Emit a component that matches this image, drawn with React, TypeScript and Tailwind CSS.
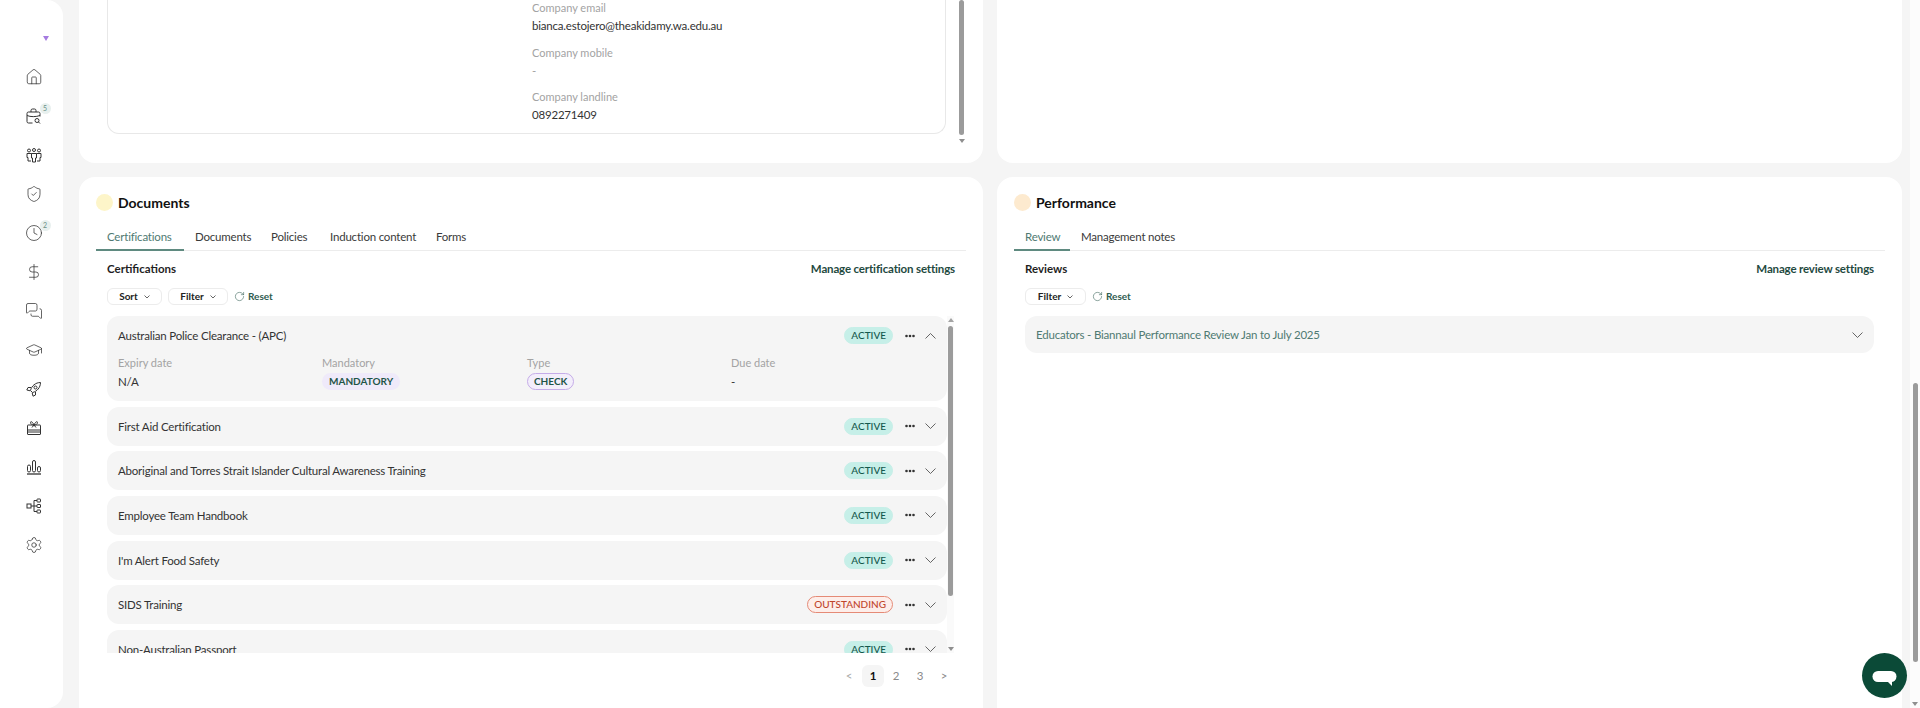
import React from "react";
import {
  Clock,
  DollarSign,
  GraduationCap,
  House,
  MessagesSquare,
  RotateCw,
  Settings,
  ShieldCheck,
} from "lucide-react";

const FONT = "font-['Lato','Liberation_Sans',sans-serif]";
const BODY = "text-[11.5px] tracking-[-0.2px]";
const ICON = "#333333";

const BriefcaseSearch = () => (
  <svg width="16" height="16" viewBox="0 0 16 16" fill="none" stroke={ICON} strokeWidth="1" className="shrink-0">
    <path d="M6.500 15H2.500a1.500 1.500 0 0 1-1.500-1.500V5.500A1.500 1.500 0 0 1 2.500 4h10A1.500 1.500 0 0 1 14 5.500v3" />
    <path d="M5 4V2.500A1.500 1.500 0 0 1 6.500 1h2A1.500 1.500 0 0 1 10 2.500V4M1 7.500c3.500 1.500 9 1.500 13 0" />
    <circle cx="11" cy="12.500" r="2" />
    <path d="M12.500 14l1.500 1.500" />
  </svg>
);

const Team = () => (
  <svg width="16" height="16" viewBox="0 0 16 16" fill="none" stroke={ICON} strokeWidth="1" className="shrink-0">
    <circle cx="3" cy="3.500" r="1.500" />
    <circle cx="8" cy="3" r="1.500" />
    <circle cx="13" cy="3.500" r="1.500" />
    <path d="M5.500 6.500h5v4.500L9.500 11v4h-3v-4l-1 0z" />
    <path d="M5.500 6.500H1v4h1v3.500h3M10.500 6.500H15v4h-1v3.500h-3" />
  </svg>
);

const RocketIcon = () => (
  <svg width="16" height="16" viewBox="0 0 16 16" fill="none" stroke={ICON} strokeWidth="1" className="shrink-0">
    <path d="M4.500 9.500C5.500 5 9.500 1.500 14.500 1.500c0 5-3.500 9-8 10z" />
    <circle cx="9.500" cy="6.500" r="1.500" />
    <path d="M5 6.500H2L0.800 9l3.400 0.800M9.500 11v3L7 15.200l-0.800-3.400" />
  </svg>
);

const GiftBox = () => (
  <svg width="16" height="16" viewBox="0 0 16 16" fill="none" stroke={ICON} strokeWidth="1" className="shrink-0">
    <rect x="1.500" y="5" width="13" height="9.500" rx="0.500" />
    <path d="M1.500 10h13M1.500 12h13" />
    <path d="M8 5C6.500 1.500 4.500 1 4.500 2.500S6 5 8 5zm0 0c1.500-3.500 3.500-4 3.500-2.500S10 5 8 5z" />
    <path d="M6 7.500l2-2.500 2 2.500" />
  </svg>
);

const Bars = () => (
  <svg width="16" height="16" viewBox="0 0 16 16" fill="none" stroke={ICON} strokeWidth="1" className="shrink-0">
    <rect x="1.500" y="6" width="3" height="7" rx="1.500" />
    <rect x="6.500" y="1.500" width="3" height="11.500" rx="1.500" />
    <rect x="11.500" y="7.500" width="3" height="5.500" rx="1.500" />
    <path d="M1 15h14" strokeWidth="1.300" />
  </svg>
);

const TreeNodes = () => (
  <svg width="16" height="16" viewBox="0 0 16 16" fill="none" stroke={ICON} strokeWidth="1" className="shrink-0">
    <rect x="1" y="6" width="4" height="4" />
    <rect x="11" y="1" width="3.500" height="3" rx="0.500" />
    <rect x="11" y="6.500" width="3.500" height="3" rx="0.500" />
    <rect x="11" y="12" width="3.500" height="3" rx="0.500" />
    <path d="M5 8H11M8 2.500V13.500M8 2.500h3M8 13.500h3" />
  </svg>
);

const Chevron = ({ up }: { up?: boolean }) => (
  <svg width="11" height="6" viewBox="0 0 11 6" fill="none" stroke="#555" strokeWidth="0.9" className={`shrink-0 ${up ? "rotate-180" : ""}`}>
    <path d="M0.500 0.500l5 5 5-5" />
  </svg>
);

const Dots = () => (
  <svg width="10" height="4" viewBox="0 0 10 4" fill="#333" className="shrink-0">
    <circle cx="1.500" cy="2" r="1.300" />
    <circle cx="5" cy="2" r="1.300" />
    <circle cx="8.500" cy="2" r="1.300" />
  </svg>
);

type NavItem = { icon: React.ReactNode; badge?: string };

const lucideProps = { size: 18, strokeWidth: 1, color: ICON, className: "shrink-0" };

const nav: NavItem[] = [
  { icon: <House {...lucideProps} /> },
  { icon: <BriefcaseSearch />, badge: "5" },
  { icon: <Team /> },
  { icon: <ShieldCheck {...lucideProps} /> },
  { icon: <Clock {...lucideProps} />, badge: "2" },
  { icon: <DollarSign {...lucideProps} /> },
  { icon: <MessagesSquare {...lucideProps} /> },
  { icon: <GraduationCap {...lucideProps} /> },
  { icon: <RocketIcon /> },
  { icon: <GiftBox /> },
  { icon: <Bars /> },
  { icon: <TreeNodes /> },
  { icon: <Settings {...lucideProps} /> },
];

const Sidebar = () => (
  <aside className="w-[63px] h-[708px] shrink-0 bg-white rounded-r-2xl flex flex-col items-center pl-[5px] pt-[36px]">
    <div className="ml-6 w-0 h-0 border-x-[3px] border-x-transparent border-t-[5px] border-t-[#a57be0]" />
    <div className="flex flex-col items-center gap-[23px] mt-[28px]">
      {nav.map((item, i) => (
        <div key={i} className="relative size-4 flex items-center justify-center">
          {item.icon}
          {item.badge && (
            <span className="absolute -top-[5.5px] -right-[8.5px] size-[11px] rounded-full bg-[#e8f0ee] text-[#6a8f85] text-[7px] leading-[11px] text-center">
              {item.badge}
            </span>
          )}
        </div>
      ))}
    </div>
  </aside>
);

const SectionTitle = ({ title, dot }: { title: string; dot: string }) => (
  <div className="flex items-center gap-[5px] h-[17px]">
    <span className={`size-[17px] rounded-full ${dot}`} />
    <h2 className="text-[14px] font-bold text-[#111] leading-none">{title}</h2>
  </div>
);

const Tabs = ({ tabs }: { tabs: { label: string; width: number }[] }) => (
  <div className="flex border-b border-[#ececec] mt-[10px] h-[30px]">
    {tabs.map((t, i) => (
      <div
        key={t.label}
        style={{ width: t.width }}
        className={`h-[30px] px-[11px] pt-[9px] ${BODY} leading-[14px] whitespace-nowrap ${
          i === 0 ? "text-[#4f7a72] border-b-2 border-[#5f8a80]" : "text-[#3a3a3a]"
        }`}
      >
        {t.label}
      </div>
    ))}
  </div>
);

const Toolbutton = ({ label, width }: { label: string; width: string }) => (
  <button className={`${width} h-[17px] border border-[#ececec] rounded-md bg-white flex items-center justify-center gap-[6px] text-[10px] font-bold text-[#222]`}>
    {label}
    <svg width="6" height="4" viewBox="0 0 6 4" fill="none" stroke="#555" strokeWidth="0.9" className="shrink-0">
      <path d="M0.500 0.500l2.500 2.500 2.500-2.500" />
    </svg>
  </button>
);

const Reset = () => (
  <div className="flex items-center gap-[3px] text-[10px] font-bold text-[#2f5c50]">
    <RotateCw size={11} strokeWidth={1.2} color="#2f5c50" />
    Reset
  </div>
);

const SubHeader = ({ title, action }: { title: string; action: string }) => (
  <div className="flex items-center justify-between h-[14px] mt-[11px]">
    <span className="text-[11.5px] font-bold text-[#1f1f1f]">{title}</span>
    <span className="text-[11.5px] tracking-[-0.15px] font-bold text-[#1f4a3f]">{action}</span>
  </div>
);

const Badge = ({ label, red }: { label: string; red?: boolean }) => (
  <span
    className={`h-[17px] px-[6px] rounded-full text-[10px] font-medium leading-[15px] border ${
      red
        ? "border-[#e58a76] bg-[#fdeeea] text-[#c0452b]"
        : "border-[#c6efe8] bg-[#c6efe8] text-[#14584c]"
    }`}
  >
    {label}
  </span>
);

const Field = ({ label, children, width }: { label: string; children: React.ReactNode; width: string }) => (
  <div className={`${width} flex flex-col gap-[3px]`}>
    <span className="text-[11px] leading-[14px] text-[#a3a3a3]">{label}</span>
    <div className={`h-[17px] flex items-center ${BODY} text-[#333]`}>{children}</div>
  </div>
);

const RowActions = ({ badge, red, open }: { badge: string; red?: boolean; open?: boolean }) => (
  <div className="flex items-center">
    <Badge label={badge} red={red} />
    <span className="ml-[12px] flex"><Dots /></span>
    <span className="ml-[10px] flex"><Chevron up={open} /></span>
  </div>
);

const rows = [
  { title: "First Aid Certification", badge: "ACTIVE" },
  { title: "Aboriginal and Torres Strait Islander Cultural Awareness Training", badge: "ACTIVE" },
  { title: "Employee Team Handbook", badge: "ACTIVE" },
  { title: "I'm Alert Food Safety", badge: "ACTIVE" },
  { title: "SIDS Training", badge: "OUTSTANDING", red: true },
  { title: "Non-Australian Passport", badge: "ACTIVE" },
];

const Documents = () => (
  <section className="bg-white rounded-2xl h-[600px] px-[17px] pt-[17px]">
    <SectionTitle title="Documents" dot="bg-[#fdf5c9]" />
    <Tabs
      tabs={[
        { label: "Certifications", width: 88 },
        { label: "Documents", width: 76 },
        { label: "Policies", width: 59 },
        { label: "Induction content", width: 106 },
        { label: "Forms", width: 52 },
      ]}
    />
    <div className="px-[11px]">
      <SubHeader title="Certifications" action="Manage certification settings" />
      <div className="flex items-center gap-[6px] mt-[12px]">
        <Toolbutton label="Sort" width="w-[55px]" />
        <Toolbutton label="Filter" width="w-[60px]" />
        <Reset />
      </div>
    </div>
    <div className="flex h-[337px] mt-[11px] pl-[11px] overflow-hidden">
      <div className="w-[840px] shrink-0 flex flex-col gap-[5.67px] overflow-hidden">
        <div className="bg-[#f5f5f5] rounded-xl h-[85px] shrink-0 px-[11px] pt-[11px]">
          <div className="flex items-center justify-between h-[17px]">
            <span className={`${BODY} text-[#333]`}>Australian Police Clearance - (APC)</span>
            <RowActions badge="ACTIVE" open />
          </div>
          <div className="flex mt-[12px]">
            <Field label="Expiry date" width="w-[204px]">N/A</Field>
            <Field label="Mandatory" width="w-[205px]">
              <span className="h-[17px] px-[7px] rounded-full bg-[#efeafa] text-[#1f5548] text-[10px] font-bold tracking-normal leading-[17px]">MANDATORY</span>
            </Field>
            <Field label="Type" width="w-[204px]">
              <span className="h-[17px] px-[6px] rounded-full bg-[#f3eefb] border border-[#c5ace8] text-[#1f5548] text-[10px] font-bold tracking-normal leading-[15px]">CHECK</span>
            </Field>
            <Field label="Due date" width="w-[150px]">-</Field>
          </div>
        </div>
        {rows.map((r) => (
          <div key={r.title} className="bg-[#f5f5f5] rounded-xl h-[39px] shrink-0 px-[11px] flex items-center justify-between">
            <span className={`${BODY} text-[#333]`}>{r.title}</span>
            <RowActions badge={r.badge} red={r.red} />
          </div>
        ))}
      </div>
      <div className="w-[7px] shrink-0 flex flex-col items-center bg-[#fafafa]">
        <div className="w-0 h-0 border-x-[3px] border-x-transparent border-b-[4px] border-b-[#a3a3a3] mt-[2px]" />
        <div className="w-[5px] h-[270px] rounded-full bg-[#9b9b9b] mt-[4px]" />
        <div className="mt-auto mb-[2px] w-0 h-0 border-x-[3px] border-x-transparent border-t-[4px] border-t-[#8f8f8f]" />
      </div>
    </div>
    <div className="flex items-center justify-end pr-[10px] mt-[12px] text-[11.5px] text-[#8a8a8a]">
      <span className="w-[26px] text-center text-[#aaa]">&lt;</span>
      <span className="size-[22px] rounded-md bg-[#f5f5f5] text-[#111] font-bold flex items-center justify-center">1</span>
      <span className="w-[24px] text-center">2</span>
      <span className="w-[24px] text-center">3</span>
      <span className="w-[24px] text-center">&gt;</span>
    </div>
  </section>
);

const Performance = () => (
  <section className="bg-white rounded-2xl h-[600px] px-[17px] pt-[17px]">
    <SectionTitle title="Performance" dot="bg-[#fdeacf]" />
    <Tabs
      tabs={[
        { label: "Review", width: 56 },
        { label: "Management notes", width: 120 },
      ]}
    />
    <div className="px-[11px]">
      <SubHeader title="Reviews" action="Manage review settings" />
      <div className="flex items-center gap-[6px] mt-[12px]">
        <Toolbutton label="Filter" width="w-[61px]" />
        <Reset />
      </div>
      <div className="bg-[#f5f5f5] rounded-xl h-[37px] mt-[11px] px-[11px] flex items-center justify-between">
        <span className={`${BODY} text-[#4f7a72]`}>Educators - Biannaul Performance Review Jan to July 2025</span>
        <Chevron />
      </div>
    </div>
  </section>
);

const Contact = ({ label, value, muted }: { label: string; value: string; muted?: boolean }) => (
  <div className="flex flex-col h-[44.5px] shrink-0">
    <span className="text-[11px] leading-[14px] text-[#a3a3a3]">{label}</span>
    <span className={`${BODY} leading-[14px] mt-[4px] ${muted ? "text-[#a3a3a3]" : "text-[#333]"}`}>{value}</span>
  </div>
);

export default function App() {
  return (
    <div className={`${FONT} w-[1920px] h-[708px] bg-[#f5f5f5] flex overflow-hidden relative`}>
      <Sidebar />
      <main className="w-[1823px] ml-4 shrink-0 grid grid-cols-[904px_905px] gap-x-[14px] content-start gap-y-[14px]">
        <section className="bg-white rounded-b-2xl h-[163px] flex pl-7 pr-[17px]">
          <div className="w-[839px] h-[134px] border border-t-0 border-[#e8e8e8] rounded-b-xl pl-[424px] pt-[1px] overflow-hidden">
            <Contact label="Company email" value="bianca.estojero@theakidamy.wa.edu.au" />
            <Contact label="Company mobile" value="-" muted />
            <Contact label="Company landline" value="0892271409" />
          </div>
          <div className="w-[7px] ml-[12px] h-[146px] flex flex-col items-center">
            <div className="w-[5px] h-[135px] rounded-full bg-[#9b9b9b]" />
            <div className="mt-[4px] w-0 h-0 border-x-[3px] border-x-transparent border-t-[4px] border-t-[#8f8f8f]" />
          </div>
        </section>
        <section className="bg-white rounded-b-2xl h-[163px]" />
        <Documents />
        <Performance />
      </main>
      <div className="ml-auto w-[10px] h-[708px] bg-[#fcfcfc] flex flex-col items-center">
        <div className="mt-[383px] w-[5px] h-[279px] rounded-full bg-[#9b9b9b]" />
        <div className="mt-auto mb-[2px] w-0 h-0 border-x-[3px] border-x-transparent border-t-[4px] border-t-[#8f8f8f]" />
      </div>
      <button className="absolute right-[13px] top-[653px] size-[45px] rounded-full bg-[#0b4a37] flex items-center justify-center">
        <svg width="25" height="16" viewBox="0 0 25 16" fill="white" className="translate-y-[3px]">
          <rect x="0.500" y="0" width="24" height="11" rx="5.500" />
          <path d="M15 10h5v5z" />
        </svg>
      </button>
    </div>
  );
}
